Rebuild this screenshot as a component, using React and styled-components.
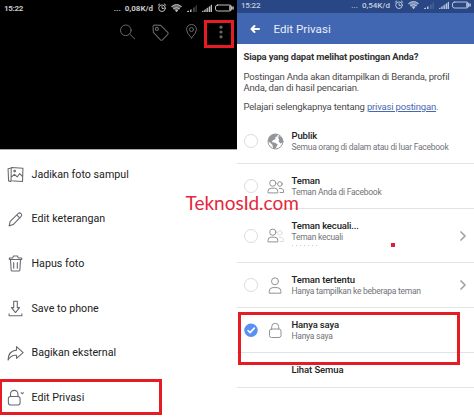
import React from "react";
import styled, { createGlobalStyle } from "styled-components";

const Global = createGlobalStyle`
  * { box-sizing: border-box; }
  body { margin: 0; background: #fff; font-family: Roboto, sans-serif; overflow: hidden; }
  svg { display: block; flex: none; }
`;
const Page = styled.main`
  position: relative; display: flex; width: 474px; height: 420px; background: #fff; overflow: hidden;
`;
const PhotoScreen = styled.section`
  width: 237px; height: 420px; display: flex; flex-direction: column;
`;
const PhotoArea = styled.div`
  height: 150px; background: #000; border-bottom: 1px solid #aaa;
`;
const PrivacyScreen = styled.section`
  width: 237px; height: 420px; display: flex; flex-direction: column;
`;
const Text = styled.span`
  display: block; white-space: nowrap;
  font-size: ${(p) => p.$size}px; line-height: ${(p) => p.$line || 12}px;
  font-weight: ${(p) => p.$weight || 400}; color: ${(p) => p.$color || "#222"};
  letter-spacing: ${(p) => p.$track || 0}px;
`;
const StatusBar = styled.div`
  display: flex; justify-content: space-between; height: ${(p) => p.$height}px;
  padding: ${(p) => p.$top}px ${(p) => p.$right}px 0 4px; background: ${(p) => p.$bg};
`;
const StatusInfo = styled.div`display: flex; align-items: center; height: 10px; gap: 4px;`;
const PhotoTools = styled.div`
  display: flex; justify-content: flex-end; align-items: center; height: 32px; gap: 17px; padding-right: 10px;
`;
const MenuList = styled.div`padding-top: 2.8px;`;
const MenuRow = styled.div`
  height: 44.6px; display: flex; align-items: center; padding-left: 7px; gap: 7.5px;
`;
const AppBar = styled.header`
  height: 31px; display: flex; align-items: center; padding-left: 13px; gap: 13.5px; background: #4267b2;
`;
const Intro = styled.div`height: 75px; padding: 7px 0 0 6.5px;`;
const Paragraph = styled.div`margin-top: ${(p) => p.$gap}px;`;
const Link = styled.span`color: #4868b0; text-decoration: underline;`;
const OptionRow = styled.div`
  height: ${(p) => p.$height}px; display: flex; padding: 11px 7px 0 ${(p) => p.$left || 7}px;
  border-bottom: 1px solid #e2e3e7;
`;
const Radio = styled.span`
  width: 14px; height: 14px; margin-top: ${(p) => 4 + p.$drop}px; flex: none; border-radius: 50%;
  border: 1.3px solid #dcdcdf;
`;
const IconSlot = styled.span`
  width: 18px; height: 18px; margin: ${(p) => 2.5 + p.$drop}px 6.5px 0 9px; flex: none;
`;
const OptionText = styled.div`flex: 1;`;
const Chevron = styled.span`margin-top: ${(p) => 5 + p.$drop}px;`;
const Marker = styled.div`
  position: absolute; left: ${(p) => p.$x}px; top: ${(p) => p.$y}px;
  width: ${(p) => p.$w}px; height: ${(p) => p.$h}px; border: 3px solid #e51c23;
`;
const Dot = styled.div`position: absolute; left: 391px; top: 243px; width: 4px; height: 4px; background: #e0203a;`;
const Specks = styled.div`
  margin-top: 1px; width: 25px; height: 1px;
  background: repeating-linear-gradient(90deg, #ccc 0 1px, transparent 1px 4px);
`;
const Watermark = styled.div`
  position: absolute; left: 185.5px; top: 196px; font: 400 19px/14px Lato, sans-serif;
  color: #e6263d; white-space: nowrap;
`;

const Svg = ({ w = 16, h = w, box = "0 0 16 16", color = "#65686c", sw = 1, children }) => (
  <svg width={w} height={h} viewBox={box} fill="none" stroke={color} strokeWidth={sw}
    strokeLinecap="round" strokeLinejoin="round">{children}</svg>
);

const StatusIcons = ({ color, dim }) => (
  <Svg w={77} h={10} box="0 0 77 10" color={color} sw={1}>
    <circle cx="5" cy="5.2" r="3.3" /><path d="M5 3.6v1.8h1.5M1.2 2.2 2.8.9M8.8 2.2 7.2.9" />
    <path d="M14.5 3.5Q19.5-.8 24.5 3.5L19.5 9Z" fill={color} stroke="none" opacity=".55" />
    <path d="M14.6 3.5Q19.5-.5 24.4 3.5M16.5 5.6Q19.5 3.2 22.5 5.6" /><circle cx="19.5" cy="7.7" r=".7" fill={color} />
    <path d="M30 9h2V7.5L30 8.3zM33 9h1.5V6L33 7z" fill={color} stroke="none" />
    <path d="M36 9h1.8V4L36 5zM38.5 9h1.3V2l-1.3 1z" fill={dim} stroke="none" />
    <path d="M45 9h1.5V7.5L45 8.3zM47.2 9h1.5V6l-1.5 1zM49.4 9h1.5V4.5l-1.5 1zM51.6 9h1.5V3l-1.5 1zM53.6 9h1.4V1.5l-1.4 1z" fill={color} stroke="none" />
    <rect x="58.5" y="2" width="16" height="6" rx="2" /><path d="M73 3v4M76 4v2" strokeWidth="1.6" />
  </Svg>
);

const icons = {
  cover: <><path d="M3.2 2.2 1 2.5l.5 11.5 2 .6" /><path d="m4 1.5 11 .6-.4 12.5-10.8-.7zM4 10.5 7 7.8l2.6 2.5 2.3-3.2 2.8 2.8" /><circle cx="7.2" cy="4.8" r=".8" /></>,
  pencil: <><path d="m2 14 1-4.3 7.7-7.4q1.2-1.1 2.5.2t.1 2.6L5.8 12.8zM9.3 3.8l2.9 2.8" /></>,
  trash: <><path d="M2.2 4.3V2.8h3.3L6 1h4l.5 1.8h3.3v1.5zM3.3 4.5l.6 9.7q.1.8.9.8h6.4q.8 0 .9-.8l.6-9.7M6.3 7v5.5M9.7 7v5.5" /></>,
  save: <><path d="M6.3 1.2h3.4v6h2.1L8 11.8 4.2 7.2h2.1zM2 13v1.8h12V13" /></>,
  share: <><path d="M9 1.5 15.2 7.2 9 12.6V9.7Q4.2 8.8 1 14.2 1.3 5.5 9 4.8z" /></>,
  lock: <><rect x="1.3" y="7" width="11" height="8" rx="2" /><path d="M3.3 7V4.8a3.5 3.5 0 0 1 7 0V7m3.1-3.5 1 1 1-1" /></>,
};
const people = <><circle cx="5.8" cy="5.2" r="3.1" /><path d="M1 14.5v-1.2q0-3.1 3.2-3.1h3.4q3.2 0 3.2 3.1v1.2z" /></>;
const friend = <><circle cx="12.9" cy="6" r="2.3" /><path d="M12.3 10.4q4.2-.4 4.2 2.6v1.5h-3.4" /></>;

const menu = [
  ["cover", "Jadikan foto sampul"], ["pencil", "Edit keterangan"], ["trash", "Hapus foto"],
  ["save", "Save to phone"], ["share", "Bagikan eksternal"], ["lock", "Edit Privasi"],
];

function optionIcon(type) {
  if (type === "globe") return (
    <Svg w={17} box="0 0 17 17" color="#92959a"><circle cx="8.5" cy="8.5" r="7.5" />
      <path d="M2 4Q5 .2 9.5 1.2L11 3 8.2 4.2 8.6 6 6 7.2 4.7 9 8 9.8l2.8 1.8-1.2 2L8.3 16 6 15.3 5.5 12 3 9.6 1 8.5Z" fill="#92959a" stroke="none" />
      <path d="m12 2.5 3 2.8 1 4-2.5 1.1-1.8-2 .4-1.8-1-1.7z" fill="#92959a" stroke="none" /></Svg>
  );
  if (type === "lock") return (
    <Svg w={17} box="0 0 17 17" color="#929397"><rect x="2.5" y="7" width="11.5" height="8.5" rx="2" /><path d="M4.7 7V4.8a3.5 3.5 0 0 1 7 0V7" /></Svg>
  );
  return (
    <Svg w={17} box="0 0 17 17" color="#929397">
      {type === "one" ? <><circle cx="8" cy="4.3" r="3.5" /><path d="M2.2 15.8v-1.5q0-3.7 3.7-3.7h4.3q3.7 0 3.7 3.7v1.5z" /></> : people}
      {type === "two" && friend}
      {type === "except" && <g opacity=".3">{friend}</g>}
    </Svg>
  );
}

function Option({ height, icon, title, sub, arrow, checked, specks, drop = 0 }) {
  return (
    <OptionRow $height={height}>
      {checked ? (
        <Svg w={14} h={24} box="0 -5 14 24"><circle cx="7" cy="6.3" r="6.7" fill="#5890f5" stroke="none" /><path d="m4 6.5 2.1 2.1 4.2-4.5" stroke="#fff" strokeWidth="1.6" /></Svg>
      ) : <Radio $drop={drop} />}
      <IconSlot $drop={drop}>{optionIcon(icon)}</IconSlot>
      <OptionText>
        <Text $size={9.5} $weight={500} $track={-0.14}>{title}</Text>
        <Text $size={8.5} $color="#717378" $line={11.5} $track={-0.26}>{sub}</Text>
        {specks && <Specks />}
      </OptionText>
      {arrow && <Chevron $drop={drop}><Svg w={8} h={12} box="0 0 8 12" color="#a1a2a6" sw={1.7}><path d="m2 2 4 4-4 4" /></Svg></Chevron>}
    </OptionRow>
  );
}

export default function App() {
  return (
    <Page>
      <Global />
      <PhotoScreen>
        <PhotoArea>
          <StatusBar $height={16} $top={3} $right={3} $bg="#000">
            <Text $size={8} $weight={700} $line={11} $track={-0.3} $color="#c8c8c8">15:22</Text>
            <StatusInfo>
              <Text $size={8} $weight={700} $line={11} $color="#c8c8c8">... &nbsp;0,08K/d</Text>
              <StatusIcons color="#bdbdbd" dim="#444" />
            </StatusInfo>
          </StatusBar>
          <PhotoTools>
            <Svg color="#686868"><circle cx="6.8" cy="6.3" r="5.3" /><path d="m10.8 10.2 5 4.8" /></Svg>
            <Svg w={17} color="#686868"><path d="M1 2.4Q1 1 2.4 1l5.8.3 6.6 6.6q.8.9 0 1.8l-5 5.2q-.9.8-1.8 0L1.3 7.9z" /><circle cx="4.6" cy="4.6" r="1.4" /></Svg>
            <Svg w={12} h={16} box="1 0 12 16" color="#686868"><path d="M6 14.5Q1 9.4 1 6a5 5 0 0 1 10 0q0 3.4-5 8.5z" transform="translate(.5 -.5)" /><circle cx="6.5" cy="5.5" r="2" /></Svg>
            <Svg w={12} h={16} box="0 0 12 16"><g fill="#686868" stroke="none"><circle cx="6" cy="3.2" r="1.6" /><circle cx="6" cy="8" r="1.6" /><circle cx="6" cy="12.8" r="1.6" /></g></Svg>
          </PhotoTools>
        </PhotoArea>
        <MenuList>
          {menu.map(([icon, label]) => (
            <MenuRow key={icon}>
              <Svg w={17}>{icons[icon]}</Svg>
              <Text $size={10.7} $line={14} $weight={400} $track={0}>{label}</Text>
            </MenuRow>
          ))}
        </MenuList>
      </PhotoScreen>
      <PrivacyScreen>
        <StatusBar $height={13} $top={0} $right={3} $bg="#294784">
          <Text $size={8} $weight={500} $line={11} $track={-0.2} $color="#c5cedf">15:22</Text>
          <StatusInfo>
            <Text $size={8} $weight={500} $line={11} $color="#c5cedf">... &nbsp;0,54K/d</Text>
            <StatusIcons color="#b9c5dc" dim="#46649d" />
          </StatusInfo>
        </StatusBar>
        <AppBar>
          <Svg w={10} h={10} box="0 0 10 10" color="#fff" sw={2}><path d="M9 5H1.5M4.5 2l-3 3 3 3" /></Svg>
          <Text $size={11.6} $line={16} $color="#e9eef8">Edit Privasi</Text>
        </AppBar>
        <Intro>
          <Text $size={9.5} $weight={700} $track={-0.17} $color="#333">Siapa yang dapat melihat postingan Anda?</Text>
          <Paragraph $gap={7.5}>
            <Text $size={9.5} $line={11} $track={-0.18} $color="#4a4a4c">Postingan Anda akan ditampilkan di Beranda, profil</Text>
            <Text $size={9.5} $line={11} $track={-0.18} $color="#4a4a4c">Anda, dan di hasil pencarian.</Text>
          </Paragraph>
          <Paragraph $gap={8}>
            <Text $size={9.5} $line={11} $track={-0.18} $color="#4a4a4c">Pelajari selengkapnya tentang <Link>privasi postingan</Link>.</Text>
          </Paragraph>
        </Intro>
        <Option height={45} icon="globe" title="Publik" sub="Semua orang di dalam atau di luar Facebook" />
        <Option height={45} icon="two" title="Teman" sub="Teman Anda di Facebook" />
        <Option height={54} icon="except" title="Teman kecuali..." sub="Teman kecuali" drop={4.5} arrow specks />
        <Option height={45} icon="one" title="Teman tertentu" sub="Hanya tampilkan ke beberapa teman" arrow />
        <Option height={45} icon="lock" title="Hanya saya" sub="Hanya saya" checked />
        <OptionRow $height={35} $left={54.5}>
          <Text $size={9.5} $weight={500} $track={-0.1}>Lihat Semua</Text>
        </OptionRow>
      </PrivacyScreen>
      <Marker $x={204} $y={20} $w={30} $h={28} />
      <Marker $x={-1} $y={379} $w={163} $h={36} />
      <Marker $x={238} $y={312} $w={222} $h={53} />
      <Dot />
      <Watermark>TeknosId.com</Watermark>
    </Page>
  );
}
